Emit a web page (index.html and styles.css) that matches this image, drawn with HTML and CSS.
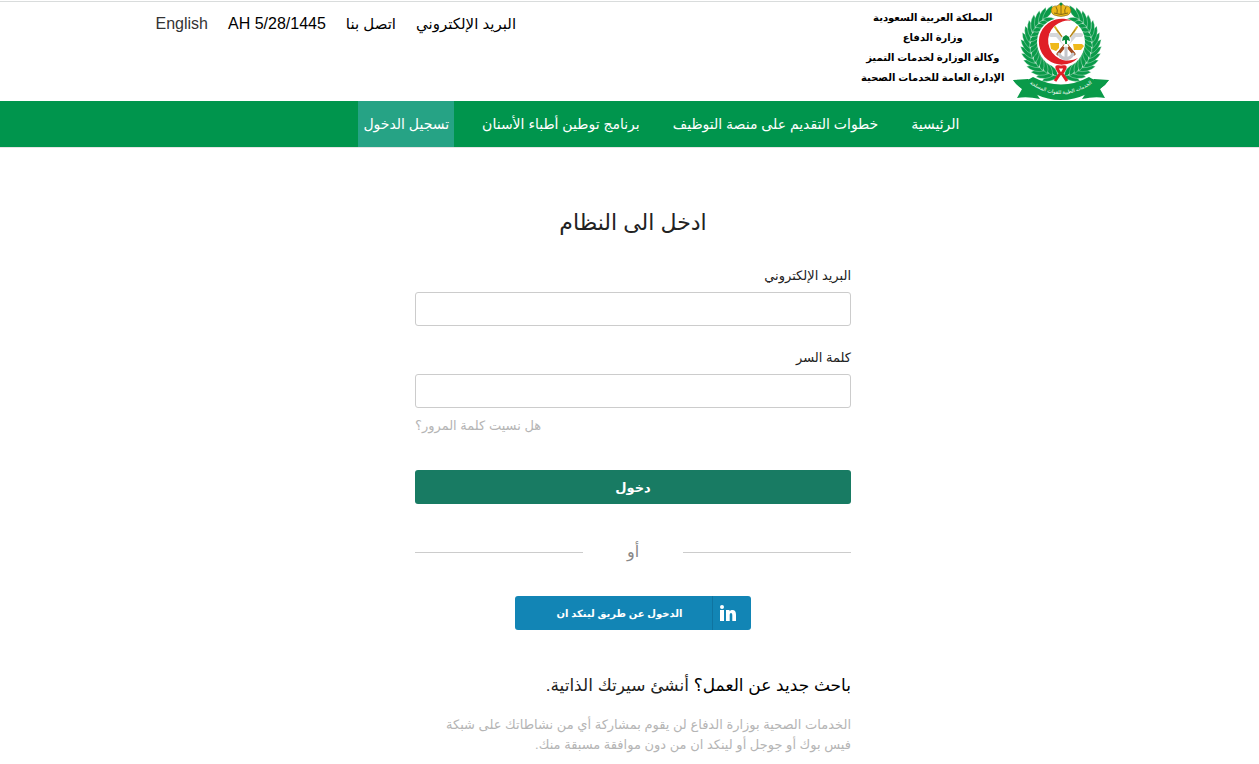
FILE: index.html
```html
<!DOCTYPE html>
<html lang="ar" dir="rtl">
<head>
    <meta charset="UTF-8">
    <meta name="viewport" content="width=device-width, initial-scale=1.0">
    <title>ادخل الى النظام</title>
    <link rel="stylesheet" href="styles.css">
</head>
<body>
    <header class="header">
        <div class="container header-inner">
            <div class="brand">
                <svg class="emblem" viewBox="0 0 98 99" aria-hidden="true">
                    <defs>
                        <g id="leaf">
                            <path d="M19 51 Q10 46 9 36 Q19 39 19 51Z"/>
                            <path d="M18 50 Q17 41 27 36 Q27 46 18 50Z"/>
                        </g>
                        <g id="leaves">
                            <use href="#leaf"/>
                            <use href="#leaf" transform="rotate(10 49 43)"/>
                            <use href="#leaf" transform="rotate(20 49 43)"/>
                            <use href="#leaf" transform="rotate(30 49 43)"/>
                        </g>
                        <g id="branch">
                            <use href="#leaves" transform="rotate(-72 49 43)"/>
                            <use href="#leaves" transform="rotate(-32 49 43)"/>
                            <use href="#leaves" transform="rotate(8 49 43)"/>
                            <use href="#leaves" transform="rotate(38 49 43)"/>
                        </g>
                        <path id="motto" d="M17 81 Q49 103 81 81"/>
                    </defs>
                    <!-- wreath -->
                    <g fill="#0a9a49" stroke="#fff" stroke-width=".3">
                        <use href="#branch"/>
                        <use href="#branch" transform="translate(98 0) scale(-1 1)"/>
                    </g>
                    <circle cx="49" cy="40" r="24" fill="#fff"/>
                    <!-- crescent -->
                    <path d="M60 19 A23 23 0 1 0 66 56 A20 20 0 1 1 60 19Z" fill="#e01f26"/>
                    <!-- crossed weapons -->
                    <g stroke-linecap="round" fill="none">
                        <path d="M43 25 L51 37 M65 25 L57 37" stroke="#d8b31e" stroke-width="2"/>
                        <path d="M39 33 L45 33 L52 41 M69 33 L63 33 L56 41" stroke="#d5d7da" stroke-width="4"/>
                        <path d="M45 52 L63 28 M63 52 L45 28" stroke="#a9712b" stroke-width="1"/>
                        <path d="M46 52 L51 46 M62 52 L57 46" stroke="#a34b20" stroke-width="3"/>
                        <path d="M54 46 V57 M47 52 Q49 56 54 57 Q59 56 61 52" stroke="#c3c6ca" stroke-width="3"/>
                    </g>
                    <path d="M38 41 H47 V46 L44 49 L39 47Z M61 42 H70 L72 44 L69 48 H62Z" fill="#efb91b"/>
                    <circle cx="54" cy="38" r="5" fill="#fff"/>
                    <path d="M53 42 V38 L50 39 L51 35 L54 33 L57 35 L58 39 L55 38 V42Z" fill="#0a8a3c"/>
                    <!-- crown -->
                    <path d="M42 13 C37 10 39 3 45 4 L49 1 L53 4 C59 3 61 10 56 13 Q49 16 42 13Z" fill="#efb91b" stroke="#7a6416" stroke-width=".6"/>
                    <path d="M42 11 Q49 14 56 11 M49 2 V12 M44 5 Q46 8 45 11 M54 5 Q52 8 53 11" fill="none" stroke="#6b5812" stroke-width=".8"/>
                    <circle cx="49" cy="2" r="1.500" fill="#0a8a3c"/>
                    <!-- ribbon knot -->
                    <path d="M49 73 C42 62 45 65 49 65 C53 65 56 62 49 73 M49 70 L43 79 M49 70 L55 79" fill="none" stroke="#e01f26" stroke-width="3"/>
                    <!-- banner -->
                    <path d="M1 78 L16 77 L22 88 L28 97 Q15 94 5 96 L10 87Z M97 78 L82 77 L76 88 L70 97 Q83 94 93 96 L88 87Z" fill="#0a9a49"/>
                    <path d="M1 78 Q12 81 21 75 Q49 90 77 75 Q86 81 97 78 Q91 88 75 92 Q49 104 23 92 Q7 88 1 78Z" fill="#0a9a49"/>
                    <text class="motto"><textPath href="#motto" startOffset="50%" text-anchor="middle">الخدمات الطبية للقوات المسلحة</textPath></text>
                </svg>
                <div class="brand-text">
                    <div>المملكة العربية السعودية</div>
                    <div>وزارة الدفاع</div>
                    <div>وكالة الوزارة لخدمات التميز</div>
                    <div>الإدارة العامة للخدمات الصحية</div>
                </div>
            </div>
            <div class="top-links">
                <a href="#">البريد الإلكتروني</a>
                <a href="#">اتصل بنا</a>
                <span class="date" dir="ltr">AH 5/28/1445</span>
                <a href="#" class="lang" lang="en">English</a>
            </div>
        </div>
    </header>

    <nav class="nav">
        <div class="container nav-inner">
            <a href="#">الرئيسية</a>
            <a href="#">خطوات التقديم على منصة التوظيف</a>
            <a href="#">برنامج توطين أطباء الأسنان</a>
            <a href="#" class="active">تسجيل الدخول</a>
        </div>
    </nav>

    <main class="login">
        <h1>ادخل الى النظام</h1>
        <form>
            <label for="email">البريد الإلكتروني</label>
            <input type="email" id="email">
            <label for="password">كلمة السر</label>
            <input type="password" id="password">
            <a href="#" class="forgot">هل نسيت كلمة المرور؟</a>
            <button type="submit" class="submit">دخول</button>
        </form>
        <div class="divider"><span>أو</span></div>
        <button type="button" class="linkedin">
            <span class="linkedin-icon">
                <svg viewBox="0 0 16 16" width="16" height="16" fill="#fff" aria-hidden="true">
                    <circle cx="2" cy="2" r="2"/>
                    <path d="M0 5H4V16H0Z M6 5H9.500V6.500C10 5.500 11 5 12.400 5C15 5 16 7 16 9.700V16H12.300V10.400C12.300 9 12 8 11 8C10 8 9.700 9 9.700 10.400V16H6Z"/>
                </svg>
            </span>
            <span class="linkedin-text">الدخول عن طريق لينكد ان</span>
        </button>
        <p class="signup">باحث جديد عن العمل؟ <a href="#">أنشئ سيرتك الذاتية.</a></p>
        <p class="note">الخدمات الصحية بوزارة الدفاع لن يقوم بمشاركة أي من نشاطاتك على شبكة فيس بوك أو جوجل أو لينكد ان من دون موافقة مسبقة منك.</p>
    </main>
</body>
</html>
```

FILE: styles.css
```css
* {
    box-sizing: border-box;
}
body {
    margin: 0;
    background: #fff;
    color: #222;
    font-family: "Liberation Sans", "DejaVu Sans", sans-serif;
    font-size: 13px;
}
a {
    color: inherit;
    text-decoration: none;
}
.container {
    max-width: 960px;
    margin: 0 auto;
}
.header {
    margin-top: 1px;
    border-top: 1px solid #d9dcdc;
}
.header-inner {
    display: flex;
    justify-content: space-between;
    align-items: flex-start;
}
.brand {
    display: flex;
    gap: 7px;
}
.emblem {
    display: block;
    width: 98px;
    height: 99px;
}
.motto {
    font-size: 5px;
    fill: #fff;
}
.brand-text {
    padding-top: 6px;
    font-size: 10px;
    font-weight: bold;
    line-height: 20px;
    text-align: center;
    color: #000;
}
.top-links {
    display: flex;
    gap: 20px;
    padding: 12px 6px 0;
    font-size: 15px;
    line-height: 20px;
    color: #000;
}
.date,
.lang {
    font-size: 16px;
}
.lang {
    color: #333;
}
.nav {
    background: #00954d;
    border-bottom: 1px solid #e5e5e5;
}
.nav-inner {
    display: flex;
    gap: 23px;
    padding-right: 145px;
    color: #fff;
    font-size: 14px;
}
.nav a {
    padding: 0 5px;
    line-height: 46px;
    white-space: nowrap;
}
.nav .active {
    background: #26a385;
}
.login {
    display: flex;
    flex-direction: column;
    max-width: 443px;
    margin: 0 auto;
    padding: 60px 0 0 7px;
}
h1 {
    margin: 0 0 28px;
    font-size: 22px;
    font-weight: normal;
    line-height: 30px;
    text-align: center;
}
form {
    display: flex;
    flex-direction: column;
}
label {
    margin-bottom: 6px;
    line-height: 20px;
}
input {
    width: 100%;
    height: 34px;
    margin-bottom: 22px;
    padding: 6px 10px;
    border: 1px solid #ccc;
    border-radius: 3px;
    background: #fff;
    font: inherit;
}
#password {
    margin-bottom: 8px;
}
.forgot {
    align-self: flex-end;
    margin-bottom: 34px;
    line-height: 20px;
    color: #b5b5b5;
}
button {
    height: 34px;
    padding: 0;
    border: 0;
    border-radius: 3px;
    color: #fff;
    font-family: inherit;
    font-weight: bold;
    cursor: pointer;
}
.submit {
    background: #187b63;
    font-size: 13px;
}
.divider {
    display: flex;
    align-items: center;
    margin: 38px 0 34px;
    font-size: 16px;
    line-height: 20px;
    color: #888;
}
.divider::before,
.divider::after {
    content: "";
    flex: 1;
    border-top: 1px solid #ccc;
}
.divider span {
    width: 100px;
    text-align: center;
}
.linkedin {
    display: flex;
    align-items: center;
    align-self: center;
    width: 236px;
    background: #1285b5;
    font-size: 10px;
}
.linkedin-icon {
    display: flex;
    align-items: center;
    width: 39px;
    height: 34px;
    padding-right: 15px;
    border-left: 1px solid #0f74a0;
}
.linkedin-text {
    flex: 1;
    padding-left: 12px;
}
.signup {
    margin: 44px 0 17px;
    font-size: 17px;
    line-height: 24px;
    color: #000;
}
.signup a {
    color: #222;
}
.note {
    margin: 0;
    padding-left: 20px;
    line-height: 20px;
    color: #b5b5b5;
}
```
